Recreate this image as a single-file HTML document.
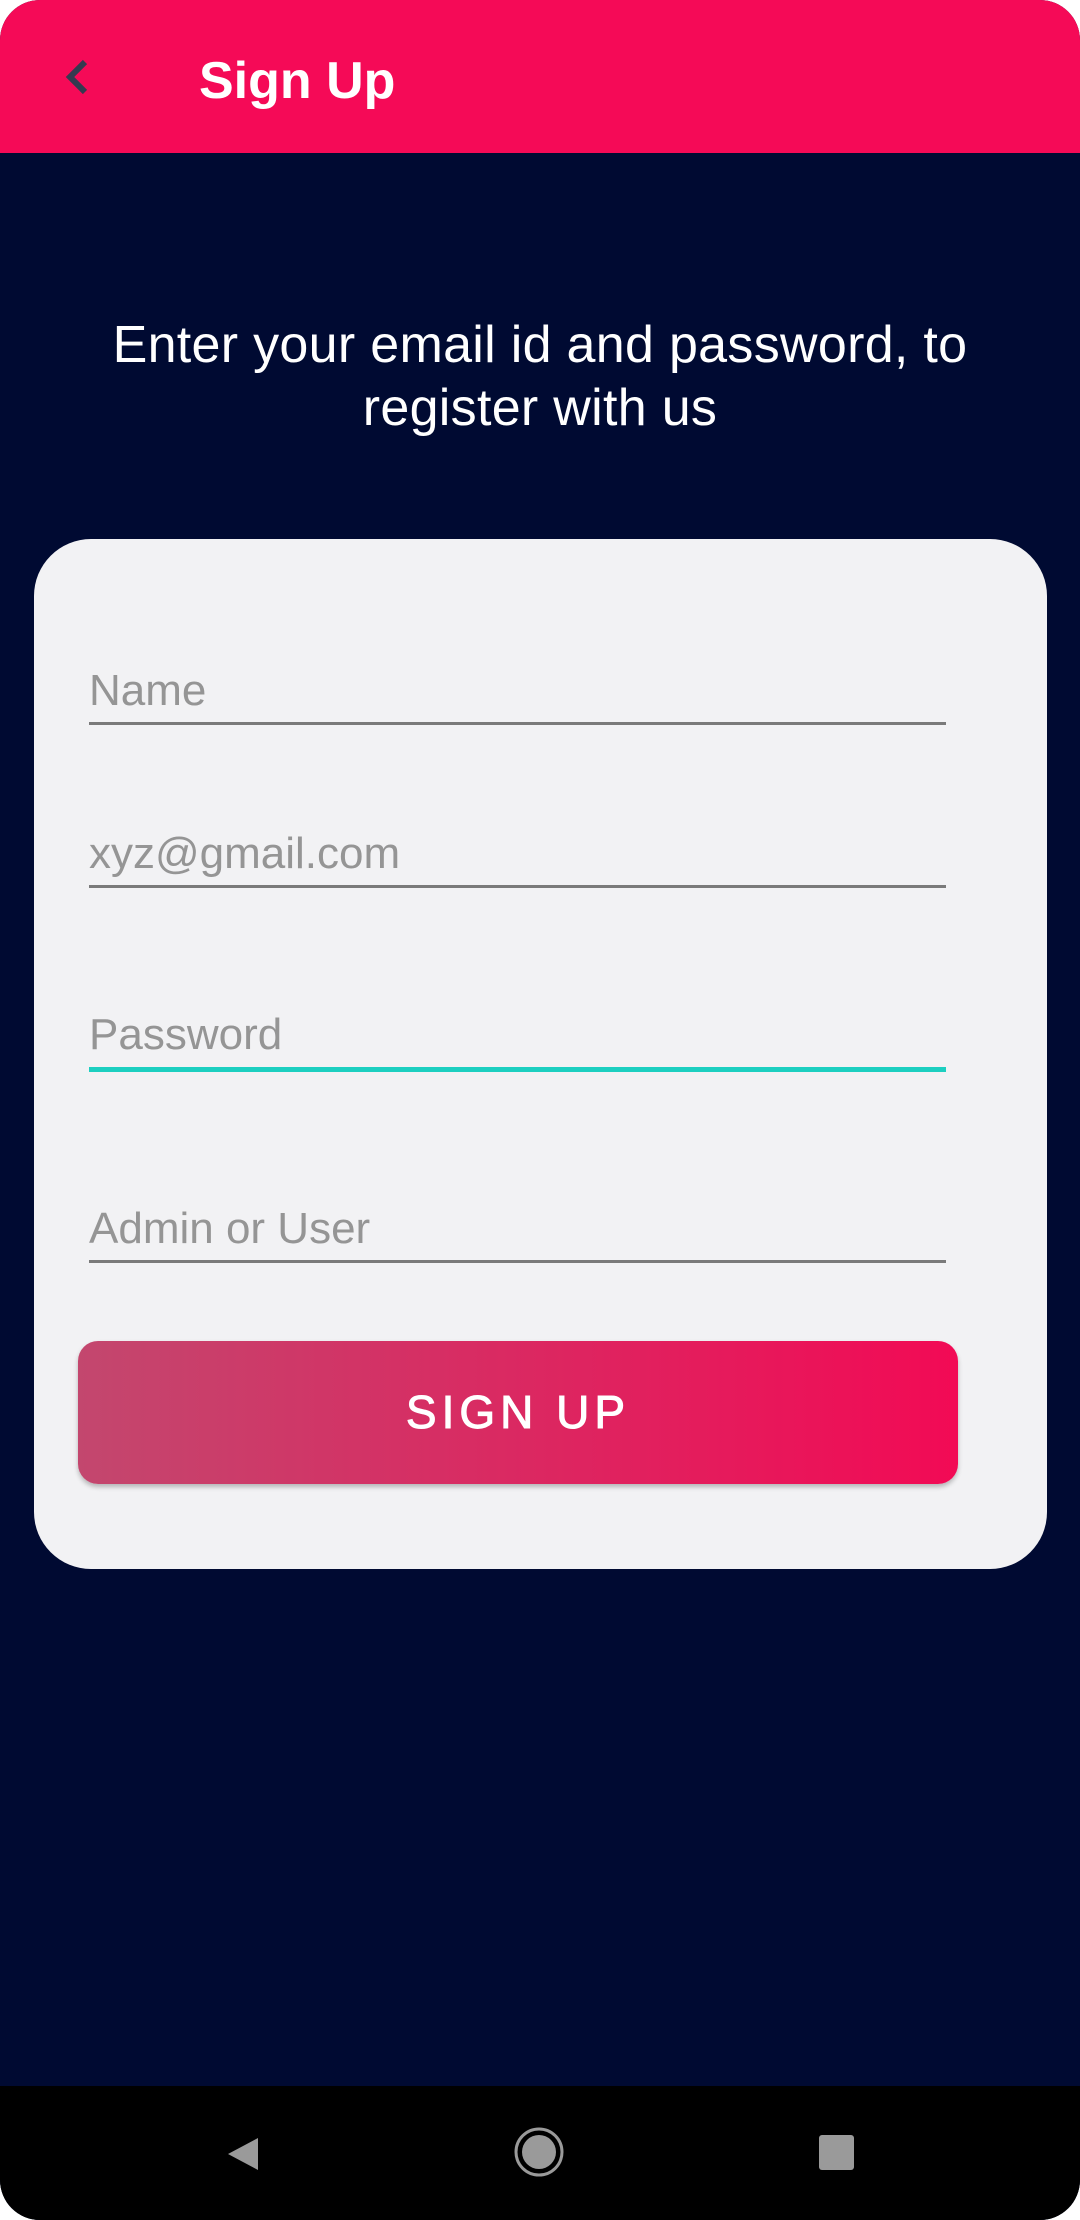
<!DOCTYPE html>
<html><head><style>
*{margin:0;padding:0;box-sizing:border-box}
body{width:1080px;height:2220px;background:#fff;position:relative;overflow:hidden;font-family:"Liberation Sans",sans-serif}
.app{position:absolute;left:0;top:0;width:1080px;height:2220px;background:#000A32;border-radius:40px 40px 40px 40px;overflow:hidden}
.hdr{position:absolute;left:0;top:0;width:1080px;height:153px;background:#F50A57}
.title{position:absolute;left:199px;top:49px;font-size:52px;font-weight:bold;color:#fff;line-height:64px}
.intro{position:absolute;left:0;width:1080px;top:314px;text-align:center;color:#fff;font-size:52px;line-height:63px;letter-spacing:0.3px}
.card{position:absolute;left:34px;top:539px;width:1013px;height:1030px;background:#F2F2F4;border-radius:57px}
.f{position:absolute;left:89px;width:857px;color:#959595;font-size:44px}
.ln{position:absolute;left:89px;width:857px;height:3px;background:#7a7a7a}
.btn{position:absolute;left:78px;top:1341px;width:880px;height:143px;border-radius:20px;background:linear-gradient(90deg,#C3476E,#F20A55);color:#fff;font-size:46px;letter-spacing:5px;text-align:center;line-height:143px;box-shadow:0 3px 5px rgba(0,0,0,.25);-webkit-text-stroke:1px #fff}
.nav{position:absolute;left:0;top:2086px;width:1080px;height:134px;background:#000}
</style></head><body>
<div class="app">
<div class="hdr">
<svg style="position:absolute;left:60px;top:56px" width="36" height="44" viewBox="0 0 36 44"><path d="M25 6 L10 21 L25 36" stroke="#343a50" stroke-width="6" fill="none"/></svg>
<div class="title">Sign Up</div>
</div>
<div class="intro">Enter your email id and password, to<br>register with us</div>
<div class="card"></div>
<div class="f" style="top:666px">Name</div><div class="ln" style="top:722px"></div>
<div class="f" style="top:829px">xyz@gmail.com</div><div class="ln" style="top:885px"></div>
<div class="f" style="top:1010px">Password</div><div class="ln" style="top:1067px;height:5px;background:#1DCFC0"></div>
<div class="f" style="top:1204px">Admin or User</div><div class="ln" style="top:1260px"></div>
<div class="btn">SIGN UP</div>
<div class="nav">
<svg style="position:absolute;left:222px;top:48px" width="40" height="40"><path d="M36 4 L36 36 L6 20 Z" fill="#9a9a9a"/></svg>
<svg style="position:absolute;left:513px;top:40px" width="52" height="52"><circle cx="26" cy="26" r="23" fill="none" stroke="#9a9a9a" stroke-width="3"/><circle cx="26" cy="26" r="17" fill="#9a9a9a"/></svg>
<div style="position:absolute;left:819px;top:49px;width:35px;height:35px;background:#9a9a9a;border-radius:3px"></div>
</div>
</div>
</body></html>
